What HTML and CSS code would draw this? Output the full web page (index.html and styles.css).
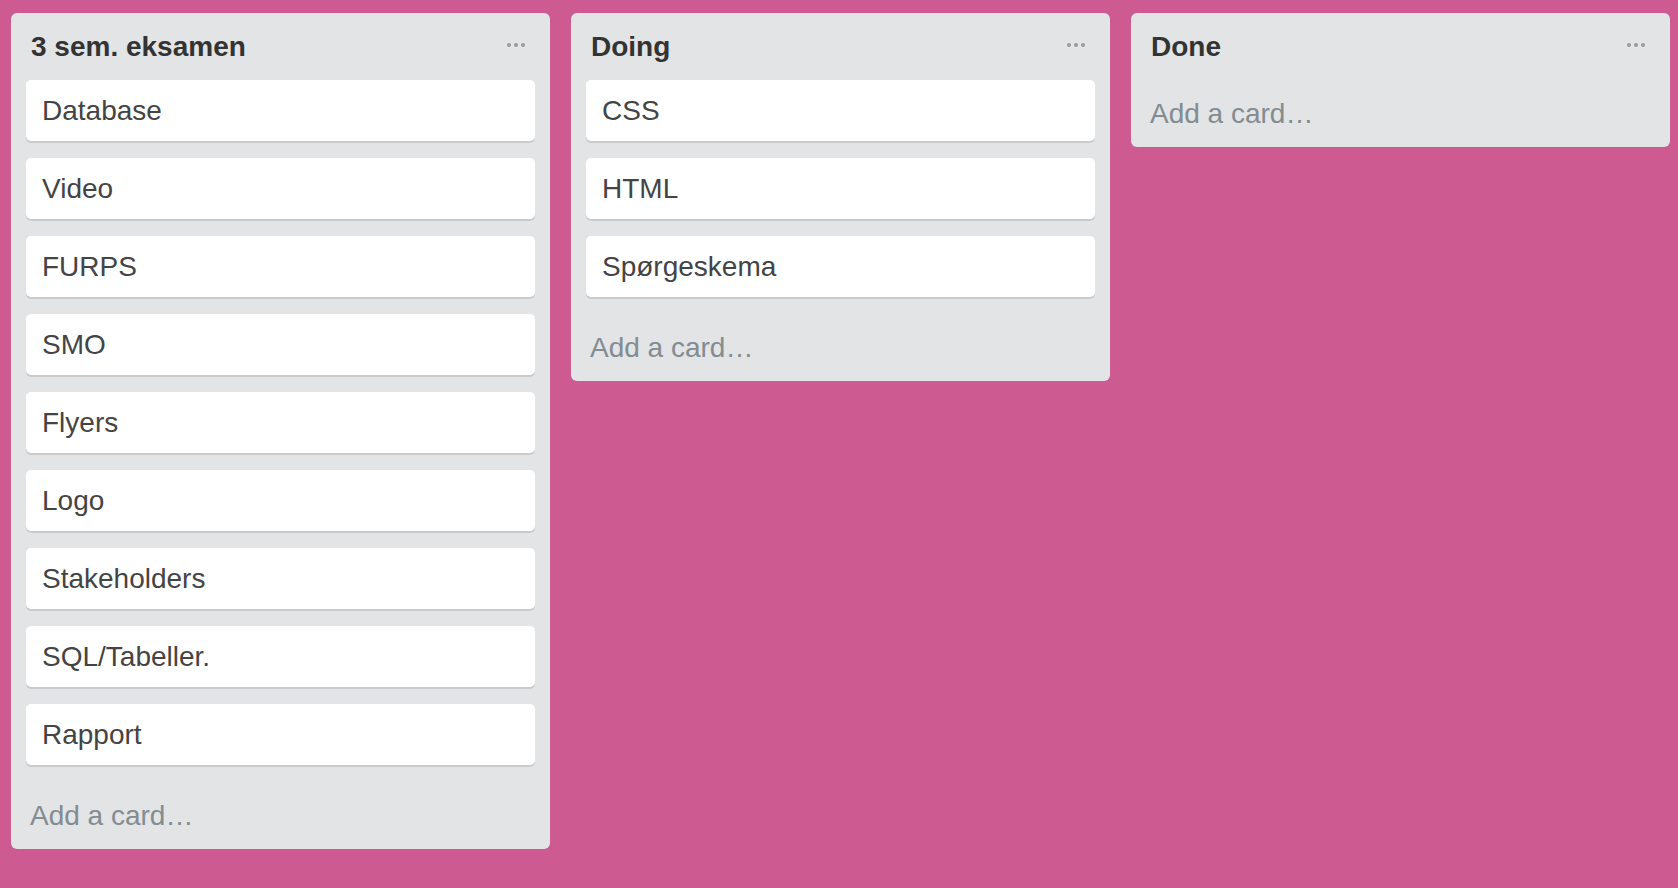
FILE: index.html
```html
<!DOCTYPE html>
<html lang="da">
<head>
<meta charset="utf-8">
<title>Board</title>
<link rel="stylesheet" href="styles.css">
</head>
<body>
<div class="board">
  <section class="list">
    <header class="list-header">
      <h2 class="list-title">3 sem. eksamen</h2>
      <span class="list-menu"><i></i><i></i><i></i></span>
    </header>
    <div class="cards">
      <div class="card">Database</div>
      <div class="card">Video</div>
      <div class="card">FURPS</div>
      <div class="card">SMO</div>
      <div class="card">Flyers</div>
      <div class="card">Logo</div>
      <div class="card">Stakeholders</div>
      <div class="card">SQL/Tabeller.</div>
      <div class="card">Rapport</div>
    </div>
    <div class="add-card">Add a card…</div>
  </section>
  <section class="list">
    <header class="list-header">
      <h2 class="list-title">Doing</h2>
      <span class="list-menu"><i></i><i></i><i></i></span>
    </header>
    <div class="cards">
      <div class="card">CSS</div>
      <div class="card">HTML</div>
      <div class="card">Spørgeskema</div>
    </div>
    <div class="add-card">Add a card…</div>
  </section>
  <section class="list">
    <header class="list-header">
      <h2 class="list-title">Done</h2>
      <span class="list-menu"><i></i><i></i><i></i></span>
    </header>
    <div class="cards"></div>
    <div class="add-card">Add a card…</div>
  </section>
</div>
</body>
</html>
```

FILE: styles.css
```css
html, body {
  margin: 0;
  padding: 0;
  height: 100%;
}
body {
  background: #cd5a91;
  font-family: "Liberation Sans", Arial, Helvetica, sans-serif;
  overflow: hidden;
}
.board {
  display: flex;
  align-items: flex-start;
  gap: 21px;
  padding: 13px 0 0 11px;
}
.list {
  width: 539px;
  flex: none;
  background: #e2e4e6;
  border-radius: 6px;
  display: flex;
  flex-direction: column;
}
.list-header {
  height: 67px;
  display: flex;
  align-items: center;
  justify-content: space-between;
  padding: 0 25px 0 20px;
  box-sizing: border-box;
}
.list-title {
  margin: 0;
  font-size: 28px;
  font-weight: 700;
  color: #333333;
  line-height: 32px;
  padding-top: 1px;
}
.list-menu {
  display: flex;
  gap: 3px;
  padding-bottom: 4px;
}
.list-menu i {
  display: block;
  width: 4px;
  height: 4px;
  border-radius: 50%;
  background: #999999;
}
.cards {
  display: flex;
  flex-direction: column;
  gap: 17px;
  padding: 0 15px;
}
.cards:not(:empty) {
  padding-bottom: 17px;
}
.card {
  height: 61px;
  background: #ffffff;
  border-radius: 5px;
  box-shadow: 0 2px 0 #c8cbce;
  display: flex;
  align-items: center;
  padding: 0 16px;
  font-size: 28px;
  color: #444444;
}
.add-card {
  height: 67px;
  display: flex;
  align-items: center;
  padding: 0 19px;
  font-size: 28px;
  color: #838c91;
}
```
